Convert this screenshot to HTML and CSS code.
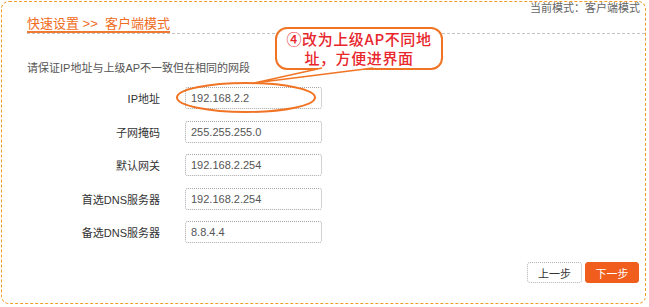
FILE: index.html
```html
<!DOCTYPE html>
<html lang="zh-CN">
<head>
  <meta charset="UTF-8">
  <title>快速设置 | 客户端模式</title>
  <meta name="viewport" content="width=device-width, initial-scale=1.0" />
  <link rel="stylesheet" href="styles.css">
</head>
<body>
  <div class="page">
    <div class="status">当前模式：客户端模式</div>

    <div class="title-bar">
      <span class="title">快速设置 &gt;&gt;&nbsp; 客户端模式</span>
    </div>

    <p class="note">请保证IP地址与上级AP不一致但在相同的网段</p>

    <div class="form">
      <label for="ip">IP地址</label>
      <input type="text" id="ip" value="192.168.2.2" />

      <label for="mask">子网掩码</label>
      <input type="text" id="mask" value="255.255.255.0" />

      <label for="gateway">默认网关</label>
      <input type="text" id="gateway" value="192.168.2.254" />

      <label for="dns1">首选DNS服务器</label>
      <input type="text" id="dns1" value="192.168.2.254" />

      <label for="dns2">备选DNS服务器</label>
      <input type="text" id="dns2" value="8.8.4.4" />
    </div>

    <div class="actions">
      <button class="btn">上一步</button>
      <button class="btn btn-next">下一步</button>
    </div>
  </div>

  <!-- annotation over the screenshot -->
  <div class="callout">
    <div class="callout-line">④改为上级AP不同地</div>
    <div class="callout-line">址，方便进界面</div>
  </div>
  <svg class="marks" width="649" height="307" viewBox="0 0 649 307">
    <path d="M322 68 L254 83 L373 68" fill="#fff" stroke="#f07424" stroke-width="1.6" stroke-linejoin="round" />
    <ellipse cx="246" cy="97.5" rx="69" ry="14.5" fill="none" stroke="#f07424" stroke-width="2" />
  </svg>
</body>
</html>
```

FILE: styles.css
```css
body {
  font-family: "Liberation Sans", "Noto Sans CJK SC", sans-serif;
  margin: 0;
  background: #fff;
  color: #333;
  position: relative;
  width: 649px;
  height: 307px;
  overflow: hidden;
}

.page {
  box-sizing: border-box;
  width: 645px;
  height: 303px;
  margin: 1px 0 0 1px;
  border: 1px dashed #f29c2a;
  border-radius: 8px;
}

.status {
  font-size: 11px;
  line-height: 12px;
  color: #666;
  text-align: right;
  padding-right: 5px;
}

.title-bar {
  display: flex;
  margin: 3px 0 0 25px;
  border-bottom: 1px dashed #c4c4c4;
}

.title {
  font-size: 13px;
  line-height: 14px;
  color: #ef6c22;
  border-bottom: 2px solid #f07a30;
}

.note {
  margin: 27px 0 0 25px;
  font-size: 11px;
  line-height: 14px;
  color: #555;
}

.form {
  display: grid;
  grid-template-columns: 158px 137px;
  column-gap: 25px;
  row-gap: 11.5px;
  margin-top: 12px;
  align-items: center;
}

.form label {
  text-align: right;
  font-size: 11px;
  color: #333;
}

.form input {
  box-sizing: border-box;
  height: 22px;
  margin: 0;
  padding: 0 5px;
  border: 1px dotted #a8a8a8;
  border-radius: 3px;
  font-family: "Liberation Sans", sans-serif;
  font-size: 11px;
  color: #555;
  outline: none;
}

.actions {
  display: flex;
  justify-content: flex-end;
  gap: 3px;
  margin-top: 19px;
  padding-right: 6px;
}

.btn {
  box-sizing: border-box;
  width: 55px;
  height: 21px;
  padding: 0;
  border: 1px dotted #b4b4b4;
  border-radius: 3px;
  background: #fff;
  color: #333;
  font-family: "Noto Sans CJK SC", sans-serif;
  font-size: 11px;
  cursor: pointer;
}

.btn-next {
  width: 54px;
  background: #f05d1c;
  border: 1px solid #f05d1c;
  color: #fff;
}

.callout {
  position: absolute;
  left: 275px;
  top: 27px;
  box-sizing: border-box;
  width: 168px;
  height: 43px;
  border: 2px solid #f07424;
  border-radius: 12px;
  background: #fff;
  text-align: center;
  font-family: "Noto Sans CJK SC", sans-serif;
  font-size: 15px;
  font-weight: 500;
  letter-spacing: 0.6px;
  color: #e8262c;
}

.callout-line {
  height: 19px;
  line-height: 19px;
}

.marks {
  position: absolute;
  left: 0;
  top: 0;
  pointer-events: none;
}
```
